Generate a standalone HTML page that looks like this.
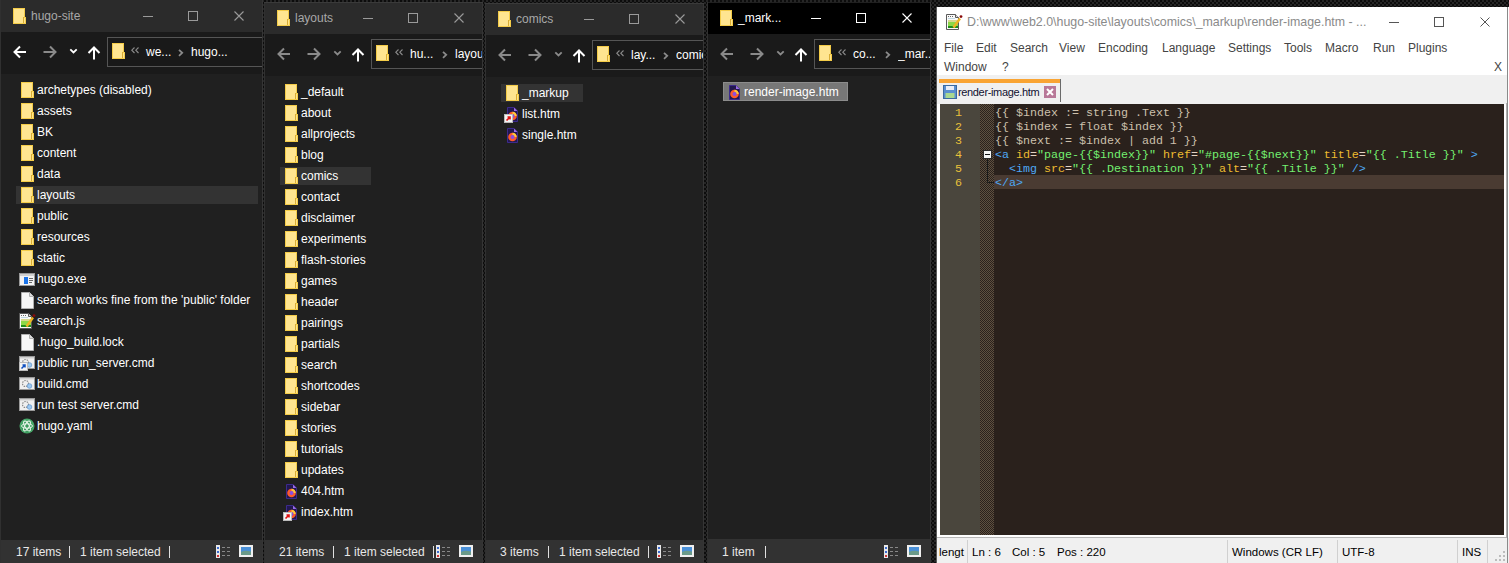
<!DOCTYPE html><html><head><meta charset="utf-8"><style>
html,body{margin:0;padding:0;}body{width:1509px;height:563px;overflow:hidden;position:relative;background-color:#0c0c0c;background-image:linear-gradient(45deg,#262626 25%,transparent 25%,transparent 75%,#262626 75%),linear-gradient(45deg,#262626 25%,transparent 25%,transparent 75%,#262626 75%);background-size:4px 4px;background-position:0 0,2px 2px;font-family:"Liberation Sans",sans-serif;}
body div{position:absolute;}.t{white-space:pre;}
</style></head><body>
<div style="left:0px;top:0px;width:263px;height:563px;background:#202020;border-left:1px solid #303030;border-right:1px solid #353535;box-sizing:border-box;"></div>
<div style="left:1px;top:0px;width:261px;height:32px;background:#2b2b2b;"></div>
<svg style="position:absolute;left:13px;top:8px;" width="13" height="16" viewBox="0 0 13 16"><rect x="0" y="0" width="12" height="16" fill="#f4cc48"/><rect x="1" y="1" width="10" height="14" fill="#ffe590"/><rect x="10" y="9" width="3" height="7" fill="#f4cc48"/><rect x="11" y="10" width="1" height="5" fill="#ffe48c"/><rect x="10" y="9" width="1" height="6" fill="#d8ac34"/><rect x="0" y="15" width="13" height="1" fill="#f4cc48"/></svg>
<div class="t" style="left:31px;top:8.5px;font-size:12px;line-height:15px;color:#a8a8a8;">hugo-site</div>
<div style="left:143px;top:16px;width:10px;height:1px;background:#9a9a9a;"></div>
<div style="left:188px;top:11px;width:10px;height:10px;background:transparent;border:1px solid #9a9a9a;box-sizing:border-box;"></div>
<svg style="position:absolute;left:234px;top:11px;" width="10" height="10" viewBox="0 0 10 10"><path d="M0.5 0.5 L9.5 9.5 M9.5 0.5 L0.5 9.5" stroke="#9a9a9a" stroke-width="1.1"/></svg>
<div style="left:1px;top:32px;width:261px;height:42px;background:#1a1a1a;"></div>
<svg style="position:absolute;left:13px;top:45px;" width="14" height="14" viewBox="0 0 14 14"><path d="M1.5 7 H13 M7 1.5 L1.5 7 L7 12.5" stroke="#ffffff" stroke-width="2" fill="none"/></svg>
<svg style="position:absolute;left:43px;top:45px;" width="14" height="14" viewBox="0 0 14 14"><path d="M0.5 7 H12 M7 1.5 L12.5 7 L7 12.5" stroke="#8a8a8a" stroke-width="2" fill="none"/></svg>
<svg style="position:absolute;left:69px;top:48px;" width="9" height="7" viewBox="0 0 9 7"><path d="M1.3 1.3 L4.5 4.5 L7.7 1.3" stroke="#ffffff" stroke-width="1.8" fill="none"/></svg>
<svg style="position:absolute;left:87px;top:46px;" width="14" height="14" viewBox="0 0 14 14"><path d="M7 13.5 V1.5 M1.5 7 L7 1.5 L12.5 7" stroke="#ffffff" stroke-width="2" fill="none"/></svg>
<div style="left:107px;top:37px;width:155px;height:30px;background:#191919;border:1px solid #555;border-right:none;box-sizing:border-box;"></div>
<svg style="position:absolute;left:112px;top:43px;" width="13" height="16" viewBox="0 0 13 16"><rect x="0" y="0" width="12" height="16" fill="#f4cc48"/><rect x="1" y="1" width="10" height="14" fill="#ffe590"/><rect x="10" y="9" width="3" height="7" fill="#f4cc48"/><rect x="11" y="10" width="1" height="5" fill="#ffe48c"/><rect x="10" y="9" width="1" height="6" fill="#d8ac34"/><rect x="0" y="15" width="13" height="1" fill="#f4cc48"/></svg>
<svg style="position:absolute;left:131px;top:47px;" width="9" height="7" viewBox="0 0 9 7"><path d="M3.5 0.5 L0.8 3.2 L3.5 6 M7.5 0.5 L4.8 3.2 L7.5 6" stroke="#8a8a8a" stroke-width="1.1" fill="none"/></svg>
<div class="t" style="left:146px;top:44.5px;font-size:12px;line-height:15px;color:#ffffff;">we...</div>
<svg style="position:absolute;left:178px;top:49px;" width="6" height="8" viewBox="0 0 6 8"><path d="M1 0.8 L4.2 3.8 L1 6.8" stroke="#8a8a8a" stroke-width="1.8" fill="none"/></svg>
<div style="left:191px;top:37px;width:71px;height:30px;overflow:hidden">
<div class="t" style="left:0px;top:7.5px;font-size:12px;line-height:15px;color:#ffffff;">hugo...</div>
</div>
<svg style="position:absolute;left:21px;top:82px;" width="13" height="16" viewBox="0 0 13 16"><rect x="0" y="0" width="12" height="16" fill="#f4cc48"/><rect x="1" y="1" width="10" height="14" fill="#ffe590"/><rect x="10" y="9" width="3" height="7" fill="#f4cc48"/><rect x="11" y="10" width="1" height="5" fill="#ffe48c"/><rect x="10" y="9" width="1" height="6" fill="#d8ac34"/><rect x="0" y="15" width="13" height="1" fill="#f4cc48"/></svg>
<div class="t" style="left:37px;top:82.5px;font-size:12px;line-height:15px;color:#ffffff;">archetypes (disabled)</div>
<svg style="position:absolute;left:21px;top:103px;" width="13" height="16" viewBox="0 0 13 16"><rect x="0" y="0" width="12" height="16" fill="#f4cc48"/><rect x="1" y="1" width="10" height="14" fill="#ffe590"/><rect x="10" y="9" width="3" height="7" fill="#f4cc48"/><rect x="11" y="10" width="1" height="5" fill="#ffe48c"/><rect x="10" y="9" width="1" height="6" fill="#d8ac34"/><rect x="0" y="15" width="13" height="1" fill="#f4cc48"/></svg>
<div class="t" style="left:37px;top:103.5px;font-size:12px;line-height:15px;color:#ffffff;">assets</div>
<svg style="position:absolute;left:21px;top:124px;" width="13" height="16" viewBox="0 0 13 16"><rect x="0" y="0" width="12" height="16" fill="#f4cc48"/><rect x="1" y="1" width="10" height="14" fill="#ffe590"/><rect x="10" y="9" width="3" height="7" fill="#f4cc48"/><rect x="11" y="10" width="1" height="5" fill="#ffe48c"/><rect x="10" y="9" width="1" height="6" fill="#d8ac34"/><rect x="0" y="15" width="13" height="1" fill="#f4cc48"/></svg>
<div class="t" style="left:37px;top:124.5px;font-size:12px;line-height:15px;color:#ffffff;">BK</div>
<svg style="position:absolute;left:21px;top:145px;" width="13" height="16" viewBox="0 0 13 16"><rect x="0" y="0" width="12" height="16" fill="#f4cc48"/><rect x="1" y="1" width="10" height="14" fill="#ffe590"/><rect x="10" y="9" width="3" height="7" fill="#f4cc48"/><rect x="11" y="10" width="1" height="5" fill="#ffe48c"/><rect x="10" y="9" width="1" height="6" fill="#d8ac34"/><rect x="0" y="15" width="13" height="1" fill="#f4cc48"/></svg>
<div class="t" style="left:37px;top:145.5px;font-size:12px;line-height:15px;color:#ffffff;">content</div>
<svg style="position:absolute;left:21px;top:166px;" width="13" height="16" viewBox="0 0 13 16"><rect x="0" y="0" width="12" height="16" fill="#f4cc48"/><rect x="1" y="1" width="10" height="14" fill="#ffe590"/><rect x="10" y="9" width="3" height="7" fill="#f4cc48"/><rect x="11" y="10" width="1" height="5" fill="#ffe48c"/><rect x="10" y="9" width="1" height="6" fill="#d8ac34"/><rect x="0" y="15" width="13" height="1" fill="#f4cc48"/></svg>
<div class="t" style="left:37px;top:166.5px;font-size:12px;line-height:15px;color:#ffffff;">data</div>
<div style="left:16px;top:186px;width:242px;height:18px;background:#333333;"></div>
<svg style="position:absolute;left:21px;top:187px;" width="13" height="16" viewBox="0 0 13 16"><rect x="0" y="0" width="12" height="16" fill="#f4cc48"/><rect x="1" y="1" width="10" height="14" fill="#ffe590"/><rect x="10" y="9" width="3" height="7" fill="#f4cc48"/><rect x="11" y="10" width="1" height="5" fill="#ffe48c"/><rect x="10" y="9" width="1" height="6" fill="#d8ac34"/><rect x="0" y="15" width="13" height="1" fill="#f4cc48"/></svg>
<div class="t" style="left:37px;top:187.5px;font-size:12px;line-height:15px;color:#ffffff;">layouts</div>
<svg style="position:absolute;left:21px;top:208px;" width="13" height="16" viewBox="0 0 13 16"><rect x="0" y="0" width="12" height="16" fill="#f4cc48"/><rect x="1" y="1" width="10" height="14" fill="#ffe590"/><rect x="10" y="9" width="3" height="7" fill="#f4cc48"/><rect x="11" y="10" width="1" height="5" fill="#ffe48c"/><rect x="10" y="9" width="1" height="6" fill="#d8ac34"/><rect x="0" y="15" width="13" height="1" fill="#f4cc48"/></svg>
<div class="t" style="left:37px;top:208.5px;font-size:12px;line-height:15px;color:#ffffff;">public</div>
<svg style="position:absolute;left:21px;top:229px;" width="13" height="16" viewBox="0 0 13 16"><rect x="0" y="0" width="12" height="16" fill="#f4cc48"/><rect x="1" y="1" width="10" height="14" fill="#ffe590"/><rect x="10" y="9" width="3" height="7" fill="#f4cc48"/><rect x="11" y="10" width="1" height="5" fill="#ffe48c"/><rect x="10" y="9" width="1" height="6" fill="#d8ac34"/><rect x="0" y="15" width="13" height="1" fill="#f4cc48"/></svg>
<div class="t" style="left:37px;top:229.5px;font-size:12px;line-height:15px;color:#ffffff;">resources</div>
<svg style="position:absolute;left:21px;top:250px;" width="13" height="16" viewBox="0 0 13 16"><rect x="0" y="0" width="12" height="16" fill="#f4cc48"/><rect x="1" y="1" width="10" height="14" fill="#ffe590"/><rect x="10" y="9" width="3" height="7" fill="#f4cc48"/><rect x="11" y="10" width="1" height="5" fill="#ffe48c"/><rect x="10" y="9" width="1" height="6" fill="#d8ac34"/><rect x="0" y="15" width="13" height="1" fill="#f4cc48"/></svg>
<div class="t" style="left:37px;top:250.5px;font-size:12px;line-height:15px;color:#ffffff;">static</div>
<svg style="position:absolute;left:19px;top:273px;" width="16" height="13" viewBox="0 0 16 13"><rect x="0.5" y="0.5" width="15" height="12" fill="#f2f2f2" stroke="#9a9a9a"/><rect x="1" y="1" width="14" height="2" fill="#cfcfcf"/><rect x="5" y="4" width="4" height="7" fill="#1a73e8"/><rect x="10" y="5" width="4" height="1" fill="#666"/><rect x="10" y="7" width="4" height="1" fill="#666"/><rect x="10" y="9" width="3" height="1" fill="#666"/></svg>
<div class="t" style="left:37px;top:271.5px;font-size:12px;line-height:15px;color:#ffffff;">hugo.exe</div>
<svg style="position:absolute;left:21px;top:292px;" width="13" height="17" viewBox="0 0 13 17"><path d="M0.5 0.5 H8.5 L12.5 4.5 V16.5 H0.5 Z" fill="#f7f7f7" stroke="#b0b0b0"/><path d="M8.5 0.5 V4.5 H12.5" fill="#ddd" stroke="#b0b0b0"/></svg>
<div class="t" style="left:37px;top:292.5px;font-size:12px;line-height:15px;color:#ffffff;">search works fine from the &#x27;public&#x27; folder</div>
<svg style="position:absolute;left:19px;top:313px;" width="17" height="17" viewBox="0 0 17 17"><path d="M0.5 0.5 H9.5 L12.5 3.5 V15.5 H0.5 Z" fill="#fafafa" stroke="#5a5a5a"/><path d="M9.5 0.5 V3.5 H12.5" fill="#e0e0e0" stroke="#5a5a5a"/><rect x="2" y="2" width="1" height="1" fill="#666"/><rect x="4" y="2" width="1" height="1" fill="#666"/><rect x="6" y="2" width="1" height="1" fill="#666"/><rect x="2" y="4" width="7" height="1" fill="#c0d8e0"/><rect x="2" y="6" width="10" height="2" fill="#d8d890"/><rect x="2" y="8" width="10" height="4" fill="#8cd848"/><rect x="2" y="12" width="10" height="2" fill="#1e8a1a"/><path d="M7.5 13.5 L14 4.5" stroke="#eeb422" stroke-width="2.4"/><circle cx="15" cy="2.6" r="1.4" fill="#8a0a0a"/></svg>
<div class="t" style="left:37px;top:313.5px;font-size:12px;line-height:15px;color:#ffffff;">search.js</div>
<svg style="position:absolute;left:21px;top:334px;" width="13" height="17" viewBox="0 0 13 17"><path d="M0.5 0.5 H8.5 L12.5 4.5 V16.5 H0.5 Z" fill="#f7f7f7" stroke="#b0b0b0"/><path d="M8.5 0.5 V4.5 H12.5" fill="#ddd" stroke="#b0b0b0"/></svg>
<div class="t" style="left:37px;top:334.5px;font-size:12px;line-height:15px;color:#ffffff;">.hugo_build.lock</div>
<svg style="position:absolute;left:19px;top:356px;" width="16" height="13" viewBox="0 0 16 13"><rect x="0.5" y="0.5" width="15" height="12" fill="#f0f0f0" stroke="#9a9a9a"/><rect x="1" y="1" width="14" height="1.5" fill="#cfcfcf"/><circle cx="6.5" cy="6.5" r="3" fill="none" stroke="#888" stroke-width="1.2" stroke-dasharray="1.5 1"/><circle cx="10.5" cy="9" r="2.3" fill="#9cc8f0" stroke="#6a9bd0" stroke-width="0.8"/></svg>
<svg style="position:absolute;left:19px;top:362px;" width="9" height="9" viewBox="0 0 9 9"><rect x="0.5" y="0.5" width="8" height="8" fill="#f4f4f4" stroke="#bbb"/><path d="M2.5 6.5 L6 3 M3.5 3 H6 V5.5" stroke="#1050c0" stroke-width="1.5" fill="none"/></svg>
<div class="t" style="left:37px;top:355.5px;font-size:12px;line-height:15px;color:#ffffff;">public run_server.cmd</div>
<svg style="position:absolute;left:19px;top:377px;" width="16" height="13" viewBox="0 0 16 13"><rect x="0.5" y="0.5" width="15" height="12" fill="#f0f0f0" stroke="#9a9a9a"/><rect x="1" y="1" width="14" height="1.5" fill="#cfcfcf"/><circle cx="6.5" cy="6.5" r="3" fill="none" stroke="#888" stroke-width="1.2" stroke-dasharray="1.5 1"/><circle cx="10.5" cy="9" r="2.3" fill="#9cc8f0" stroke="#6a9bd0" stroke-width="0.8"/></svg>
<div class="t" style="left:37px;top:376.5px;font-size:12px;line-height:15px;color:#ffffff;">build.cmd</div>
<svg style="position:absolute;left:19px;top:398px;" width="16" height="13" viewBox="0 0 16 13"><rect x="0.5" y="0.5" width="15" height="12" fill="#f0f0f0" stroke="#9a9a9a"/><rect x="1" y="1" width="14" height="1.5" fill="#cfcfcf"/><circle cx="6.5" cy="6.5" r="3" fill="none" stroke="#888" stroke-width="1.2" stroke-dasharray="1.5 1"/><circle cx="10.5" cy="9" r="2.3" fill="#9cc8f0" stroke="#6a9bd0" stroke-width="0.8"/></svg>
<div class="t" style="left:37px;top:397.5px;font-size:12px;line-height:15px;color:#ffffff;">run test server.cmd</div>
<svg style="position:absolute;left:19px;top:418px;" width="16" height="16" viewBox="0 0 16 16"><circle cx="8" cy="8" r="7.5" fill="#48a86a"/><circle cx="8" cy="9" r="5.5" fill="#3a9a5c"/><ellipse cx="8" cy="8" rx="5.5" ry="2.2" fill="none" stroke="#e8f5ea" stroke-width="1"/><ellipse cx="8" cy="8" rx="5.5" ry="2.2" fill="none" stroke="#e8f5ea" stroke-width="1" transform="rotate(60 8 8)"/><ellipse cx="8" cy="8" rx="5.5" ry="2.2" fill="none" stroke="#e8f5ea" stroke-width="1" transform="rotate(-60 8 8)"/></svg>
<div class="t" style="left:37px;top:418.5px;font-size:12px;line-height:15px;color:#ffffff;">hugo.yaml</div>
<div style="left:1px;top:540px;width:261px;height:23px;background:#323232;"></div>
<div class="t" style="left:16px;top:545.0px;font-size:12px;line-height:15px;color:#e8e8e8;">17 items</div>
<div style="left:69px;top:546px;width:1px;height:12px;background:#e0e0e0;"></div>
<div class="t" style="left:80px;top:545.0px;font-size:12px;line-height:15px;color:#e8e8e8;">1 item selected</div>
<div style="left:169px;top:546px;width:1px;height:12px;background:#e0e0e0;"></div>
<svg style="position:absolute;left:216px;top:545px;" width="17" height="13" viewBox="0 0 17 13"><rect x="0" y="0" width="4" height="13" fill="#e8e8e8"/><rect x="1" y="2" width="2" height="2" fill="#3a6ad0"/><rect x="1" y="6" width="2" height="2" fill="#3a6ad0"/><rect x="1" y="10" width="2" height="2" fill="#d03030"/><path d="M6 2.5 H9 M11 2.5 H14 M6 6.5 H9 M11 6.5 H14 M6 10.5 H9 M11 10.5 H14" stroke="#888" stroke-width="1"/></svg>
<svg style="position:absolute;left:239px;top:545px;" width="14" height="12" viewBox="0 0 14 12"><rect x="0" y="0" width="14" height="12" fill="#f0f0f0"/><rect x="2" y="2" width="10" height="8" fill="#4a90d8"/><path d="M2 7 Q6 5 12 6.5 V10 H2 Z" fill="#6a9a8a"/></svg>
<div style="left:264px;top:2px;width:219px;height:561px;background:#202020;border-left:1px solid #303030;border-right:1px solid #353535;box-sizing:border-box;"></div>
<div style="left:265px;top:3px;width:217px;height:31px;background:#2b2b2b;"></div>
<div style="left:264px;top:2px;width:219px;height:1px;background:#3a3a3a;"></div>
<svg style="position:absolute;left:277px;top:10px;" width="13" height="16" viewBox="0 0 13 16"><rect x="0" y="0" width="12" height="16" fill="#f4cc48"/><rect x="1" y="1" width="10" height="14" fill="#ffe590"/><rect x="10" y="9" width="3" height="7" fill="#f4cc48"/><rect x="11" y="10" width="1" height="5" fill="#ffe48c"/><rect x="10" y="9" width="1" height="6" fill="#d8ac34"/><rect x="0" y="15" width="13" height="1" fill="#f4cc48"/></svg>
<div class="t" style="left:295px;top:10.5px;font-size:12px;line-height:15px;color:#a8a8a8;">layouts</div>
<div style="left:363px;top:18px;width:10px;height:1px;background:#9a9a9a;"></div>
<div style="left:408px;top:13px;width:10px;height:10px;background:transparent;border:1px solid #9a9a9a;box-sizing:border-box;"></div>
<svg style="position:absolute;left:454px;top:13px;" width="10" height="10" viewBox="0 0 10 10"><path d="M0.5 0.5 L9.5 9.5 M9.5 0.5 L0.5 9.5" stroke="#9a9a9a" stroke-width="1.1"/></svg>
<div style="left:265px;top:34px;width:217px;height:42px;background:#1a1a1a;"></div>
<svg style="position:absolute;left:277px;top:47px;" width="14" height="14" viewBox="0 0 14 14"><path d="M1.5 7 H13 M7 1.5 L1.5 7 L7 12.5" stroke="#8a8a8a" stroke-width="2" fill="none"/></svg>
<svg style="position:absolute;left:307px;top:47px;" width="14" height="14" viewBox="0 0 14 14"><path d="M0.5 7 H12 M7 1.5 L12.5 7 L7 12.5" stroke="#8a8a8a" stroke-width="2" fill="none"/></svg>
<svg style="position:absolute;left:333px;top:50px;" width="9" height="7" viewBox="0 0 9 7"><path d="M1.3 1.3 L4.5 4.5 L7.7 1.3" stroke="#8a8a8a" stroke-width="1.8" fill="none"/></svg>
<svg style="position:absolute;left:351px;top:48px;" width="14" height="14" viewBox="0 0 14 14"><path d="M7 13.5 V1.5 M1.5 7 L7 1.5 L12.5 7" stroke="#ffffff" stroke-width="2" fill="none"/></svg>
<div style="left:371px;top:39px;width:111px;height:30px;background:#191919;border:1px solid #555;border-right:none;box-sizing:border-box;"></div>
<svg style="position:absolute;left:376px;top:45px;" width="13" height="16" viewBox="0 0 13 16"><rect x="0" y="0" width="12" height="16" fill="#f4cc48"/><rect x="1" y="1" width="10" height="14" fill="#ffe590"/><rect x="10" y="9" width="3" height="7" fill="#f4cc48"/><rect x="11" y="10" width="1" height="5" fill="#ffe48c"/><rect x="10" y="9" width="1" height="6" fill="#d8ac34"/><rect x="0" y="15" width="13" height="1" fill="#f4cc48"/></svg>
<svg style="position:absolute;left:395px;top:49px;" width="9" height="7" viewBox="0 0 9 7"><path d="M3.5 0.5 L0.8 3.2 L3.5 6 M7.5 0.5 L4.8 3.2 L7.5 6" stroke="#8a8a8a" stroke-width="1.1" fill="none"/></svg>
<div class="t" style="left:410px;top:46.5px;font-size:12px;line-height:15px;color:#ffffff;">hu...</div>
<svg style="position:absolute;left:442px;top:51px;" width="6" height="8" viewBox="0 0 6 8"><path d="M1 0.8 L4.2 3.8 L1 6.8" stroke="#8a8a8a" stroke-width="1.8" fill="none"/></svg>
<div style="left:455px;top:39px;width:27px;height:30px;overflow:hidden">
<div class="t" style="left:0px;top:7.5px;font-size:12px;line-height:15px;color:#ffffff;">layouts</div>
</div>
<svg style="position:absolute;left:285px;top:84px;" width="13" height="16" viewBox="0 0 13 16"><rect x="0" y="0" width="12" height="16" fill="#f4cc48"/><rect x="1" y="1" width="10" height="14" fill="#ffe590"/><rect x="10" y="9" width="3" height="7" fill="#f4cc48"/><rect x="11" y="10" width="1" height="5" fill="#ffe48c"/><rect x="10" y="9" width="1" height="6" fill="#d8ac34"/><rect x="0" y="15" width="13" height="1" fill="#f4cc48"/></svg>
<div class="t" style="left:301px;top:84.5px;font-size:12px;line-height:15px;color:#ffffff;">_default</div>
<svg style="position:absolute;left:285px;top:105px;" width="13" height="16" viewBox="0 0 13 16"><rect x="0" y="0" width="12" height="16" fill="#f4cc48"/><rect x="1" y="1" width="10" height="14" fill="#ffe590"/><rect x="10" y="9" width="3" height="7" fill="#f4cc48"/><rect x="11" y="10" width="1" height="5" fill="#ffe48c"/><rect x="10" y="9" width="1" height="6" fill="#d8ac34"/><rect x="0" y="15" width="13" height="1" fill="#f4cc48"/></svg>
<div class="t" style="left:301px;top:105.5px;font-size:12px;line-height:15px;color:#ffffff;">about</div>
<svg style="position:absolute;left:285px;top:126px;" width="13" height="16" viewBox="0 0 13 16"><rect x="0" y="0" width="12" height="16" fill="#f4cc48"/><rect x="1" y="1" width="10" height="14" fill="#ffe590"/><rect x="10" y="9" width="3" height="7" fill="#f4cc48"/><rect x="11" y="10" width="1" height="5" fill="#ffe48c"/><rect x="10" y="9" width="1" height="6" fill="#d8ac34"/><rect x="0" y="15" width="13" height="1" fill="#f4cc48"/></svg>
<div class="t" style="left:301px;top:126.5px;font-size:12px;line-height:15px;color:#ffffff;">allprojects</div>
<svg style="position:absolute;left:285px;top:147px;" width="13" height="16" viewBox="0 0 13 16"><rect x="0" y="0" width="12" height="16" fill="#f4cc48"/><rect x="1" y="1" width="10" height="14" fill="#ffe590"/><rect x="10" y="9" width="3" height="7" fill="#f4cc48"/><rect x="11" y="10" width="1" height="5" fill="#ffe48c"/><rect x="10" y="9" width="1" height="6" fill="#d8ac34"/><rect x="0" y="15" width="13" height="1" fill="#f4cc48"/></svg>
<div class="t" style="left:301px;top:147.5px;font-size:12px;line-height:15px;color:#ffffff;">blog</div>
<div style="left:280px;top:167px;width:91px;height:18px;background:#333333;"></div>
<svg style="position:absolute;left:285px;top:168px;" width="13" height="16" viewBox="0 0 13 16"><rect x="0" y="0" width="12" height="16" fill="#f4cc48"/><rect x="1" y="1" width="10" height="14" fill="#ffe590"/><rect x="10" y="9" width="3" height="7" fill="#f4cc48"/><rect x="11" y="10" width="1" height="5" fill="#ffe48c"/><rect x="10" y="9" width="1" height="6" fill="#d8ac34"/><rect x="0" y="15" width="13" height="1" fill="#f4cc48"/></svg>
<div class="t" style="left:301px;top:168.5px;font-size:12px;line-height:15px;color:#ffffff;">comics</div>
<svg style="position:absolute;left:285px;top:189px;" width="13" height="16" viewBox="0 0 13 16"><rect x="0" y="0" width="12" height="16" fill="#f4cc48"/><rect x="1" y="1" width="10" height="14" fill="#ffe590"/><rect x="10" y="9" width="3" height="7" fill="#f4cc48"/><rect x="11" y="10" width="1" height="5" fill="#ffe48c"/><rect x="10" y="9" width="1" height="6" fill="#d8ac34"/><rect x="0" y="15" width="13" height="1" fill="#f4cc48"/></svg>
<div class="t" style="left:301px;top:189.5px;font-size:12px;line-height:15px;color:#ffffff;">contact</div>
<svg style="position:absolute;left:285px;top:210px;" width="13" height="16" viewBox="0 0 13 16"><rect x="0" y="0" width="12" height="16" fill="#f4cc48"/><rect x="1" y="1" width="10" height="14" fill="#ffe590"/><rect x="10" y="9" width="3" height="7" fill="#f4cc48"/><rect x="11" y="10" width="1" height="5" fill="#ffe48c"/><rect x="10" y="9" width="1" height="6" fill="#d8ac34"/><rect x="0" y="15" width="13" height="1" fill="#f4cc48"/></svg>
<div class="t" style="left:301px;top:210.5px;font-size:12px;line-height:15px;color:#ffffff;">disclaimer</div>
<svg style="position:absolute;left:285px;top:231px;" width="13" height="16" viewBox="0 0 13 16"><rect x="0" y="0" width="12" height="16" fill="#f4cc48"/><rect x="1" y="1" width="10" height="14" fill="#ffe590"/><rect x="10" y="9" width="3" height="7" fill="#f4cc48"/><rect x="11" y="10" width="1" height="5" fill="#ffe48c"/><rect x="10" y="9" width="1" height="6" fill="#d8ac34"/><rect x="0" y="15" width="13" height="1" fill="#f4cc48"/></svg>
<div class="t" style="left:301px;top:231.5px;font-size:12px;line-height:15px;color:#ffffff;">experiments</div>
<svg style="position:absolute;left:285px;top:252px;" width="13" height="16" viewBox="0 0 13 16"><rect x="0" y="0" width="12" height="16" fill="#f4cc48"/><rect x="1" y="1" width="10" height="14" fill="#ffe590"/><rect x="10" y="9" width="3" height="7" fill="#f4cc48"/><rect x="11" y="10" width="1" height="5" fill="#ffe48c"/><rect x="10" y="9" width="1" height="6" fill="#d8ac34"/><rect x="0" y="15" width="13" height="1" fill="#f4cc48"/></svg>
<div class="t" style="left:301px;top:252.5px;font-size:12px;line-height:15px;color:#ffffff;">flash-stories</div>
<svg style="position:absolute;left:285px;top:273px;" width="13" height="16" viewBox="0 0 13 16"><rect x="0" y="0" width="12" height="16" fill="#f4cc48"/><rect x="1" y="1" width="10" height="14" fill="#ffe590"/><rect x="10" y="9" width="3" height="7" fill="#f4cc48"/><rect x="11" y="10" width="1" height="5" fill="#ffe48c"/><rect x="10" y="9" width="1" height="6" fill="#d8ac34"/><rect x="0" y="15" width="13" height="1" fill="#f4cc48"/></svg>
<div class="t" style="left:301px;top:273.5px;font-size:12px;line-height:15px;color:#ffffff;">games</div>
<svg style="position:absolute;left:285px;top:294px;" width="13" height="16" viewBox="0 0 13 16"><rect x="0" y="0" width="12" height="16" fill="#f4cc48"/><rect x="1" y="1" width="10" height="14" fill="#ffe590"/><rect x="10" y="9" width="3" height="7" fill="#f4cc48"/><rect x="11" y="10" width="1" height="5" fill="#ffe48c"/><rect x="10" y="9" width="1" height="6" fill="#d8ac34"/><rect x="0" y="15" width="13" height="1" fill="#f4cc48"/></svg>
<div class="t" style="left:301px;top:294.5px;font-size:12px;line-height:15px;color:#ffffff;">header</div>
<svg style="position:absolute;left:285px;top:315px;" width="13" height="16" viewBox="0 0 13 16"><rect x="0" y="0" width="12" height="16" fill="#f4cc48"/><rect x="1" y="1" width="10" height="14" fill="#ffe590"/><rect x="10" y="9" width="3" height="7" fill="#f4cc48"/><rect x="11" y="10" width="1" height="5" fill="#ffe48c"/><rect x="10" y="9" width="1" height="6" fill="#d8ac34"/><rect x="0" y="15" width="13" height="1" fill="#f4cc48"/></svg>
<div class="t" style="left:301px;top:315.5px;font-size:12px;line-height:15px;color:#ffffff;">pairings</div>
<svg style="position:absolute;left:285px;top:336px;" width="13" height="16" viewBox="0 0 13 16"><rect x="0" y="0" width="12" height="16" fill="#f4cc48"/><rect x="1" y="1" width="10" height="14" fill="#ffe590"/><rect x="10" y="9" width="3" height="7" fill="#f4cc48"/><rect x="11" y="10" width="1" height="5" fill="#ffe48c"/><rect x="10" y="9" width="1" height="6" fill="#d8ac34"/><rect x="0" y="15" width="13" height="1" fill="#f4cc48"/></svg>
<div class="t" style="left:301px;top:336.5px;font-size:12px;line-height:15px;color:#ffffff;">partials</div>
<svg style="position:absolute;left:285px;top:357px;" width="13" height="16" viewBox="0 0 13 16"><rect x="0" y="0" width="12" height="16" fill="#f4cc48"/><rect x="1" y="1" width="10" height="14" fill="#ffe590"/><rect x="10" y="9" width="3" height="7" fill="#f4cc48"/><rect x="11" y="10" width="1" height="5" fill="#ffe48c"/><rect x="10" y="9" width="1" height="6" fill="#d8ac34"/><rect x="0" y="15" width="13" height="1" fill="#f4cc48"/></svg>
<div class="t" style="left:301px;top:357.5px;font-size:12px;line-height:15px;color:#ffffff;">search</div>
<svg style="position:absolute;left:285px;top:378px;" width="13" height="16" viewBox="0 0 13 16"><rect x="0" y="0" width="12" height="16" fill="#f4cc48"/><rect x="1" y="1" width="10" height="14" fill="#ffe590"/><rect x="10" y="9" width="3" height="7" fill="#f4cc48"/><rect x="11" y="10" width="1" height="5" fill="#ffe48c"/><rect x="10" y="9" width="1" height="6" fill="#d8ac34"/><rect x="0" y="15" width="13" height="1" fill="#f4cc48"/></svg>
<div class="t" style="left:301px;top:378.5px;font-size:12px;line-height:15px;color:#ffffff;">shortcodes</div>
<svg style="position:absolute;left:285px;top:399px;" width="13" height="16" viewBox="0 0 13 16"><rect x="0" y="0" width="12" height="16" fill="#f4cc48"/><rect x="1" y="1" width="10" height="14" fill="#ffe590"/><rect x="10" y="9" width="3" height="7" fill="#f4cc48"/><rect x="11" y="10" width="1" height="5" fill="#ffe48c"/><rect x="10" y="9" width="1" height="6" fill="#d8ac34"/><rect x="0" y="15" width="13" height="1" fill="#f4cc48"/></svg>
<div class="t" style="left:301px;top:399.5px;font-size:12px;line-height:15px;color:#ffffff;">sidebar</div>
<svg style="position:absolute;left:285px;top:420px;" width="13" height="16" viewBox="0 0 13 16"><rect x="0" y="0" width="12" height="16" fill="#f4cc48"/><rect x="1" y="1" width="10" height="14" fill="#ffe590"/><rect x="10" y="9" width="3" height="7" fill="#f4cc48"/><rect x="11" y="10" width="1" height="5" fill="#ffe48c"/><rect x="10" y="9" width="1" height="6" fill="#d8ac34"/><rect x="0" y="15" width="13" height="1" fill="#f4cc48"/></svg>
<div class="t" style="left:301px;top:420.5px;font-size:12px;line-height:15px;color:#ffffff;">stories</div>
<svg style="position:absolute;left:285px;top:441px;" width="13" height="16" viewBox="0 0 13 16"><rect x="0" y="0" width="12" height="16" fill="#f4cc48"/><rect x="1" y="1" width="10" height="14" fill="#ffe590"/><rect x="10" y="9" width="3" height="7" fill="#f4cc48"/><rect x="11" y="10" width="1" height="5" fill="#ffe48c"/><rect x="10" y="9" width="1" height="6" fill="#d8ac34"/><rect x="0" y="15" width="13" height="1" fill="#f4cc48"/></svg>
<div class="t" style="left:301px;top:441.5px;font-size:12px;line-height:15px;color:#ffffff;">tutorials</div>
<svg style="position:absolute;left:285px;top:462px;" width="13" height="16" viewBox="0 0 13 16"><rect x="0" y="0" width="12" height="16" fill="#f4cc48"/><rect x="1" y="1" width="10" height="14" fill="#ffe590"/><rect x="10" y="9" width="3" height="7" fill="#f4cc48"/><rect x="11" y="10" width="1" height="5" fill="#ffe48c"/><rect x="10" y="9" width="1" height="6" fill="#d8ac34"/><rect x="0" y="15" width="13" height="1" fill="#f4cc48"/></svg>
<div class="t" style="left:301px;top:462.5px;font-size:12px;line-height:15px;color:#ffffff;">updates</div>
<svg style="position:absolute;left:286px;top:484px;" width="11" height="15" viewBox="0 0 11 15"><path d="M0.5 0.5 H7 L10.5 4 V14.5 H0.5 Z" fill="#22184f" stroke="#3c2a8c"/><path d="M7 0.5 V4 H10.5 Z" fill="#9a6ae8"/><circle cx="5.5" cy="9" r="4.3" fill="#ff5a2a"/><path d="M5.5 4.7 A4.3 4.3 0 0 1 9.8 9 L7.5 9 A2 2 0 0 0 5.5 7 Z" fill="#ffc93a"/><circle cx="5.5" cy="9" r="2" fill="#8b4fe0"/></svg>
<div class="t" style="left:301px;top:483.5px;font-size:12px;line-height:15px;color:#ffffff;">404.htm</div>
<svg style="position:absolute;left:286px;top:505px;" width="11" height="15" viewBox="0 0 11 15"><path d="M0.5 0.5 H7 L10.5 4 V14.5 H0.5 Z" fill="#22184f" stroke="#3c2a8c"/><path d="M7 0.5 V4 H10.5 Z" fill="#9a6ae8"/><circle cx="5.5" cy="9" r="4.3" fill="#ff5a2a"/><path d="M5.5 4.7 A4.3 4.3 0 0 1 9.8 9 L7.5 9 A2 2 0 0 0 5.5 7 Z" fill="#ffc93a"/><circle cx="5.5" cy="9" r="2" fill="#8b4fe0"/></svg>
<svg style="position:absolute;left:283px;top:512px;" width="9" height="9" viewBox="0 0 9 9"><rect x="0.5" y="0.5" width="8" height="8" fill="#f4f4f4" stroke="#bbb"/><path d="M2.5 6.5 L6 3 M3.5 3 H6 V5.5" stroke="#e01010" stroke-width="1.6" fill="none"/></svg>
<div class="t" style="left:301px;top:504.5px;font-size:12px;line-height:15px;color:#ffffff;">index.htm</div>
<div style="left:265px;top:540px;width:217px;height:23px;background:#323232;"></div>
<div class="t" style="left:279px;top:545.0px;font-size:12px;line-height:15px;color:#e8e8e8;">21 items</div>
<div style="left:333px;top:546px;width:1px;height:12px;background:#e0e0e0;"></div>
<div class="t" style="left:344px;top:545.0px;font-size:12px;line-height:15px;color:#e8e8e8;">1 item selected</div>
<div style="left:433px;top:546px;width:1px;height:12px;background:#e0e0e0;"></div>
<svg style="position:absolute;left:436px;top:545px;" width="17" height="13" viewBox="0 0 17 13"><rect x="0" y="0" width="4" height="13" fill="#e8e8e8"/><rect x="1" y="2" width="2" height="2" fill="#3a6ad0"/><rect x="1" y="6" width="2" height="2" fill="#3a6ad0"/><rect x="1" y="10" width="2" height="2" fill="#d03030"/><path d="M6 2.5 H9 M11 2.5 H14 M6 6.5 H9 M11 6.5 H14 M6 10.5 H9 M11 10.5 H14" stroke="#888" stroke-width="1"/></svg>
<svg style="position:absolute;left:459px;top:545px;" width="14" height="12" viewBox="0 0 14 12"><rect x="0" y="0" width="14" height="12" fill="#f0f0f0"/><rect x="2" y="2" width="10" height="8" fill="#4a90d8"/><path d="M2 7 Q6 5 12 6.5 V10 H2 Z" fill="#6a9a8a"/></svg>
<div style="left:485px;top:3px;width:219px;height:560px;background:#202020;border-left:1px solid #303030;border-right:1px solid #353535;box-sizing:border-box;"></div>
<div style="left:486px;top:4px;width:217px;height:31px;background:#2b2b2b;"></div>
<div style="left:485px;top:3px;width:219px;height:1px;background:#3a3a3a;"></div>
<svg style="position:absolute;left:498px;top:11px;" width="13" height="16" viewBox="0 0 13 16"><rect x="0" y="0" width="12" height="16" fill="#f4cc48"/><rect x="1" y="1" width="10" height="14" fill="#ffe590"/><rect x="10" y="9" width="3" height="7" fill="#f4cc48"/><rect x="11" y="10" width="1" height="5" fill="#ffe48c"/><rect x="10" y="9" width="1" height="6" fill="#d8ac34"/><rect x="0" y="15" width="13" height="1" fill="#f4cc48"/></svg>
<div class="t" style="left:516px;top:11.5px;font-size:12px;line-height:15px;color:#a8a8a8;">comics</div>
<div style="left:584px;top:19px;width:10px;height:1px;background:#9a9a9a;"></div>
<div style="left:629px;top:14px;width:10px;height:10px;background:transparent;border:1px solid #9a9a9a;box-sizing:border-box;"></div>
<svg style="position:absolute;left:675px;top:14px;" width="10" height="10" viewBox="0 0 10 10"><path d="M0.5 0.5 L9.5 9.5 M9.5 0.5 L0.5 9.5" stroke="#9a9a9a" stroke-width="1.1"/></svg>
<div style="left:486px;top:35px;width:217px;height:42px;background:#1a1a1a;"></div>
<svg style="position:absolute;left:498px;top:48px;" width="14" height="14" viewBox="0 0 14 14"><path d="M1.5 7 H13 M7 1.5 L1.5 7 L7 12.5" stroke="#8a8a8a" stroke-width="2" fill="none"/></svg>
<svg style="position:absolute;left:528px;top:48px;" width="14" height="14" viewBox="0 0 14 14"><path d="M0.5 7 H12 M7 1.5 L12.5 7 L7 12.5" stroke="#8a8a8a" stroke-width="2" fill="none"/></svg>
<svg style="position:absolute;left:554px;top:51px;" width="9" height="7" viewBox="0 0 9 7"><path d="M1.3 1.3 L4.5 4.5 L7.7 1.3" stroke="#8a8a8a" stroke-width="1.8" fill="none"/></svg>
<svg style="position:absolute;left:572px;top:49px;" width="14" height="14" viewBox="0 0 14 14"><path d="M7 13.5 V1.5 M1.5 7 L7 1.5 L12.5 7" stroke="#ffffff" stroke-width="2" fill="none"/></svg>
<div style="left:592px;top:40px;width:111px;height:30px;background:#191919;border:1px solid #555;border-right:none;box-sizing:border-box;"></div>
<svg style="position:absolute;left:597px;top:46px;" width="13" height="16" viewBox="0 0 13 16"><rect x="0" y="0" width="12" height="16" fill="#f4cc48"/><rect x="1" y="1" width="10" height="14" fill="#ffe590"/><rect x="10" y="9" width="3" height="7" fill="#f4cc48"/><rect x="11" y="10" width="1" height="5" fill="#ffe48c"/><rect x="10" y="9" width="1" height="6" fill="#d8ac34"/><rect x="0" y="15" width="13" height="1" fill="#f4cc48"/></svg>
<svg style="position:absolute;left:616px;top:50px;" width="9" height="7" viewBox="0 0 9 7"><path d="M3.5 0.5 L0.8 3.2 L3.5 6 M7.5 0.5 L4.8 3.2 L7.5 6" stroke="#8a8a8a" stroke-width="1.1" fill="none"/></svg>
<div class="t" style="left:631px;top:47.5px;font-size:12px;line-height:15px;color:#ffffff;">lay...</div>
<svg style="position:absolute;left:663px;top:52px;" width="6" height="8" viewBox="0 0 6 8"><path d="M1 0.8 L4.2 3.8 L1 6.8" stroke="#8a8a8a" stroke-width="1.8" fill="none"/></svg>
<div style="left:676px;top:40px;width:27px;height:30px;overflow:hidden">
<div class="t" style="left:0px;top:7.5px;font-size:12px;line-height:15px;color:#ffffff;">comics</div>
</div>
<div style="left:501px;top:84px;width:82px;height:18px;background:#333333;"></div>
<svg style="position:absolute;left:506px;top:85px;" width="13" height="16" viewBox="0 0 13 16"><rect x="0" y="0" width="12" height="16" fill="#f4cc48"/><rect x="1" y="1" width="10" height="14" fill="#ffe590"/><rect x="10" y="9" width="3" height="7" fill="#f4cc48"/><rect x="11" y="10" width="1" height="5" fill="#ffe48c"/><rect x="10" y="9" width="1" height="6" fill="#d8ac34"/><rect x="0" y="15" width="13" height="1" fill="#f4cc48"/></svg>
<div class="t" style="left:522px;top:85.5px;font-size:12px;line-height:15px;color:#ffffff;">_markup</div>
<svg style="position:absolute;left:507px;top:107px;" width="11" height="15" viewBox="0 0 11 15"><path d="M0.5 0.5 H7 L10.5 4 V14.5 H0.5 Z" fill="#22184f" stroke="#3c2a8c"/><path d="M7 0.5 V4 H10.5 Z" fill="#9a6ae8"/><circle cx="5.5" cy="9" r="4.3" fill="#ff5a2a"/><path d="M5.5 4.7 A4.3 4.3 0 0 1 9.8 9 L7.5 9 A2 2 0 0 0 5.5 7 Z" fill="#ffc93a"/><circle cx="5.5" cy="9" r="2" fill="#8b4fe0"/></svg>
<svg style="position:absolute;left:504px;top:114px;" width="9" height="9" viewBox="0 0 9 9"><rect x="0.5" y="0.5" width="8" height="8" fill="#f4f4f4" stroke="#bbb"/><path d="M2.5 6.5 L6 3 M3.5 3 H6 V5.5" stroke="#e01010" stroke-width="1.6" fill="none"/></svg>
<div class="t" style="left:522px;top:106.5px;font-size:12px;line-height:15px;color:#ffffff;">list.htm</div>
<svg style="position:absolute;left:507px;top:128px;" width="11" height="15" viewBox="0 0 11 15"><path d="M0.5 0.5 H7 L10.5 4 V14.5 H0.5 Z" fill="#22184f" stroke="#3c2a8c"/><path d="M7 0.5 V4 H10.5 Z" fill="#9a6ae8"/><circle cx="5.5" cy="9" r="4.3" fill="#ff5a2a"/><path d="M5.5 4.7 A4.3 4.3 0 0 1 9.8 9 L7.5 9 A2 2 0 0 0 5.5 7 Z" fill="#ffc93a"/><circle cx="5.5" cy="9" r="2" fill="#8b4fe0"/></svg>
<div class="t" style="left:522px;top:127.5px;font-size:12px;line-height:15px;color:#ffffff;">single.htm</div>
<div style="left:486px;top:540px;width:217px;height:23px;background:#323232;"></div>
<div class="t" style="left:500px;top:545.0px;font-size:12px;line-height:15px;color:#e8e8e8;">3 items</div>
<div style="left:548px;top:546px;width:1px;height:12px;background:#e0e0e0;"></div>
<div class="t" style="left:559px;top:545.0px;font-size:12px;line-height:15px;color:#e8e8e8;">1 item selected</div>
<div style="left:648px;top:546px;width:1px;height:12px;background:#e0e0e0;"></div>
<svg style="position:absolute;left:657px;top:545px;" width="17" height="13" viewBox="0 0 17 13"><rect x="0" y="0" width="4" height="13" fill="#e8e8e8"/><rect x="1" y="2" width="2" height="2" fill="#3a6ad0"/><rect x="1" y="6" width="2" height="2" fill="#3a6ad0"/><rect x="1" y="10" width="2" height="2" fill="#d03030"/><path d="M6 2.5 H9 M11 2.5 H14 M6 6.5 H9 M11 6.5 H14 M6 10.5 H9 M11 10.5 H14" stroke="#888" stroke-width="1"/></svg>
<svg style="position:absolute;left:680px;top:545px;" width="14" height="12" viewBox="0 0 14 12"><rect x="0" y="0" width="14" height="12" fill="#f0f0f0"/><rect x="2" y="2" width="10" height="8" fill="#4a90d8"/><path d="M2 7 Q6 5 12 6.5 V10 H2 Z" fill="#6a9a8a"/></svg>
<div style="left:707px;top:2px;width:224px;height:561px;background:#202020;border-left:1px solid #303030;border-right:1px solid #353535;box-sizing:border-box;"></div>
<div style="left:708px;top:3px;width:222px;height:31px;background:#000000;"></div>
<svg style="position:absolute;left:720px;top:10px;" width="13" height="16" viewBox="0 0 13 16"><rect x="0" y="0" width="12" height="16" fill="#f4cc48"/><rect x="1" y="1" width="10" height="14" fill="#ffe590"/><rect x="10" y="9" width="3" height="7" fill="#f4cc48"/><rect x="11" y="10" width="1" height="5" fill="#ffe48c"/><rect x="10" y="9" width="1" height="6" fill="#d8ac34"/><rect x="0" y="15" width="13" height="1" fill="#f4cc48"/></svg>
<div class="t" style="left:738px;top:10.5px;font-size:12px;line-height:15px;color:#ffffff;">_mark...</div>
<div style="left:811px;top:18px;width:10px;height:1px;background:#ffffff;"></div>
<div style="left:856px;top:13px;width:10px;height:10px;background:transparent;border:1px solid #ffffff;box-sizing:border-box;"></div>
<svg style="position:absolute;left:902px;top:13px;" width="10" height="10" viewBox="0 0 10 10"><path d="M0.5 0.5 L9.5 9.5 M9.5 0.5 L0.5 9.5" stroke="#ffffff" stroke-width="1.1"/></svg>
<div style="left:708px;top:34px;width:222px;height:42px;background:#1a1a1a;"></div>
<svg style="position:absolute;left:720px;top:47px;" width="14" height="14" viewBox="0 0 14 14"><path d="M1.5 7 H13 M7 1.5 L1.5 7 L7 12.5" stroke="#8a8a8a" stroke-width="2" fill="none"/></svg>
<svg style="position:absolute;left:750px;top:47px;" width="14" height="14" viewBox="0 0 14 14"><path d="M0.5 7 H12 M7 1.5 L12.5 7 L7 12.5" stroke="#8a8a8a" stroke-width="2" fill="none"/></svg>
<svg style="position:absolute;left:776px;top:50px;" width="9" height="7" viewBox="0 0 9 7"><path d="M1.3 1.3 L4.5 4.5 L7.7 1.3" stroke="#8a8a8a" stroke-width="1.8" fill="none"/></svg>
<svg style="position:absolute;left:794px;top:48px;" width="14" height="14" viewBox="0 0 14 14"><path d="M7 13.5 V1.5 M1.5 7 L7 1.5 L12.5 7" stroke="#ffffff" stroke-width="2" fill="none"/></svg>
<div style="left:814px;top:39px;width:116px;height:30px;background:#191919;border:1px solid #555;border-right:none;box-sizing:border-box;"></div>
<svg style="position:absolute;left:819px;top:45px;" width="13" height="16" viewBox="0 0 13 16"><rect x="0" y="0" width="12" height="16" fill="#f4cc48"/><rect x="1" y="1" width="10" height="14" fill="#ffe590"/><rect x="10" y="9" width="3" height="7" fill="#f4cc48"/><rect x="11" y="10" width="1" height="5" fill="#ffe48c"/><rect x="10" y="9" width="1" height="6" fill="#d8ac34"/><rect x="0" y="15" width="13" height="1" fill="#f4cc48"/></svg>
<svg style="position:absolute;left:838px;top:49px;" width="9" height="7" viewBox="0 0 9 7"><path d="M3.5 0.5 L0.8 3.2 L3.5 6 M7.5 0.5 L4.8 3.2 L7.5 6" stroke="#8a8a8a" stroke-width="1.1" fill="none"/></svg>
<div class="t" style="left:853px;top:46.5px;font-size:12px;line-height:15px;color:#ffffff;">co...</div>
<svg style="position:absolute;left:885px;top:51px;" width="6" height="8" viewBox="0 0 6 8"><path d="M1 0.8 L4.2 3.8 L1 6.8" stroke="#8a8a8a" stroke-width="1.8" fill="none"/></svg>
<div style="left:898px;top:39px;width:32px;height:30px;overflow:hidden">
<div class="t" style="left:0px;top:7.5px;font-size:12px;line-height:15px;color:#ffffff;">_mar...</div>
</div>
<div style="left:723px;top:82px;width:125px;height:19px;background:#777777;border:1px solid #8c8c8c;box-sizing:border-box;"></div>
<svg style="position:absolute;left:729px;top:85px;" width="11" height="15" viewBox="0 0 11 15"><path d="M0.5 0.5 H7 L10.5 4 V14.5 H0.5 Z" fill="#22184f" stroke="#3c2a8c"/><path d="M7 0.5 V4 H10.5 Z" fill="#9a6ae8"/><circle cx="5.5" cy="9" r="4.3" fill="#ff5a2a"/><path d="M5.5 4.7 A4.3 4.3 0 0 1 9.8 9 L7.5 9 A2 2 0 0 0 5.5 7 Z" fill="#ffc93a"/><circle cx="5.5" cy="9" r="2" fill="#8b4fe0"/></svg>
<div class="t" style="left:744px;top:84.5px;font-size:12px;line-height:15px;color:#ffffff;">render-image.htm</div>
<div style="left:708px;top:539px;width:222px;height:24px;background:#323232;"></div>
<div class="t" style="left:722px;top:545.0px;font-size:12px;line-height:15px;color:#e8e8e8;">1 item</div>
<div style="left:765px;top:546px;width:1px;height:12px;background:#e0e0e0;"></div>
<svg style="position:absolute;left:884px;top:545px;" width="17" height="13" viewBox="0 0 17 13"><rect x="0" y="0" width="4" height="13" fill="#e8e8e8"/><rect x="1" y="2" width="2" height="2" fill="#3a6ad0"/><rect x="1" y="6" width="2" height="2" fill="#3a6ad0"/><rect x="1" y="10" width="2" height="2" fill="#d03030"/><path d="M6 2.5 H9 M11 2.5 H14 M6 6.5 H9 M11 6.5 H14 M6 10.5 H9 M11 10.5 H14" stroke="#888" stroke-width="1"/></svg>
<svg style="position:absolute;left:907px;top:545px;" width="14" height="12" viewBox="0 0 14 12"><rect x="0" y="0" width="14" height="12" fill="#f0f0f0"/><rect x="2" y="2" width="10" height="8" fill="#4a90d8"/><path d="M2 7 Q6 5 12 6.5 V10 H2 Z" fill="#6a9a8a"/></svg>
<div style="left:936px;top:7px;width:573px;height:556px;background:#ffffff;border-left:1px solid #5a5a5a;box-sizing:border-box;"></div>
<svg style="position:absolute;left:946px;top:14px;" width="17" height="17" viewBox="0 0 17 17"><path d="M0.5 0.5 H9.5 L12.5 3.5 V15.5 H0.5 Z" fill="#fafafa" stroke="#5a5a5a"/><path d="M9.5 0.5 V3.5 H12.5" fill="#e0e0e0" stroke="#5a5a5a"/><rect x="2" y="2" width="1" height="1" fill="#666"/><rect x="4" y="2" width="1" height="1" fill="#666"/><rect x="6" y="2" width="1" height="1" fill="#666"/><rect x="2" y="4" width="7" height="1" fill="#c0d8e0"/><rect x="2" y="6" width="10" height="2" fill="#d8d890"/><rect x="2" y="8" width="10" height="4" fill="#8cd848"/><rect x="2" y="12" width="10" height="2" fill="#1e8a1a"/><path d="M7.5 13.5 L14 4.5" stroke="#eeb422" stroke-width="2.4"/><circle cx="15" cy="2.6" r="1.4" fill="#8a0a0a"/></svg>
<div class="t" style="left:967px;top:14.0px;font-size:12.4px;line-height:16px;color:#8a8a8a;">D:\www\web2.0\hugo-site\layouts\comics\_markup\render-image.htm - ...</div>
<div style="left:1389px;top:22px;width:10px;height:1px;background:#555;"></div>
<div style="left:1434px;top:17px;width:10px;height:10px;background:transparent;border:1px solid #555;box-sizing:border-box;"></div>
<svg style="position:absolute;left:1480px;top:17px;" width="10" height="10" viewBox="0 0 10 10"><path d="M0.5 0.5 L9.5 9.5 M9.5 0.5 L0.5 9.5" stroke="#555" stroke-width="1"/></svg>
<div class="t" style="left:944px;top:40.5px;font-size:12px;line-height:15px;color:#444444;">File</div>
<div class="t" style="left:976px;top:40.5px;font-size:12px;line-height:15px;color:#444444;">Edit</div>
<div class="t" style="left:1010px;top:40.5px;font-size:12px;line-height:15px;color:#444444;">Search</div>
<div class="t" style="left:1059px;top:40.5px;font-size:12px;line-height:15px;color:#444444;">View</div>
<div class="t" style="left:1098px;top:40.5px;font-size:12px;line-height:15px;color:#444444;">Encoding</div>
<div class="t" style="left:1162px;top:40.5px;font-size:12px;line-height:15px;color:#444444;">Language</div>
<div class="t" style="left:1228px;top:40.5px;font-size:12px;line-height:15px;color:#444444;">Settings</div>
<div class="t" style="left:1284px;top:40.5px;font-size:12px;line-height:15px;color:#444444;">Tools</div>
<div class="t" style="left:1325px;top:40.5px;font-size:12px;line-height:15px;color:#444444;">Macro</div>
<div class="t" style="left:1373px;top:40.5px;font-size:12px;line-height:15px;color:#444444;">Run</div>
<div class="t" style="left:1408px;top:40.5px;font-size:12px;line-height:15px;color:#444444;">Plugins</div>
<div class="t" style="left:944px;top:60.0px;font-size:12px;line-height:15px;color:#444444;">Window</div>
<div class="t" style="left:1002px;top:60.0px;font-size:12px;line-height:15px;color:#444444;">?</div>
<div class="t" style="left:1494px;top:60.0px;font-size:12px;line-height:15px;color:#444444;">X</div>
<div style="left:937px;top:75px;width:570px;height:29px;background:#f0f0f0;"></div>
<div style="left:939px;top:79px;width:122px;height:23px;background:#f0f0f0;"></div>
<div style="left:939px;top:79px;width:122px;height:4px;background:#f9a433;"></div>
<div style="left:1060px;top:79px;width:1px;height:23px;background:#6a6a6a;"></div>
<svg style="position:absolute;left:943px;top:85px;" width="14" height="14" viewBox="0 0 14 14"><rect x="0.5" y="0.5" width="13" height="13" fill="#5a8fd0" stroke="#3a6aa0"/><rect x="3" y="1" width="8" height="4" fill="#e8eef8"/><rect x="2.5" y="8" width="9" height="5" fill="#a8d890"/></svg>
<div class="t" style="left:958px;top:84.5px;font-size:11px;line-height:14px;color:#101030;letter-spacing:-0.35px;">render-image.htm</div>
<svg style="position:absolute;left:1044px;top:86px;" width="12" height="12" viewBox="0 0 12 12"><rect x="0" y="0" width="12" height="12" fill="#b87898"/><path d="M3 3 L9 9 M9 3 L3 9" stroke="#fff" stroke-width="2"/></svg>
<div style="left:940px;top:104px;width:564px;height:431px;background:#2a211c;"></div>
<div style="left:940px;top:104px;width:40px;height:431px;background:#4a463d;"></div>
<div style="left:980px;top:104px;width:14px;height:431px;background-color:#2a211c;background-image:linear-gradient(45deg,#5e5040 25%,transparent 25%,transparent 75%,#5e5040 75%),linear-gradient(45deg,#5e5040 25%,transparent 25%,transparent 75%,#5e5040 75%);background-size:2px 2px;background-position:0 0,1px 1px;"></div>
<div style="left:994px;top:175px;width:510px;height:14px;background:#4a3b32;"></div>
<div class="t" style="left:955px;top:105.5px;font-size:11.67px;line-height:15px;color:#e8c03a;font-family:'Liberation Mono', monospace;">1</div>
<div class="t" style="left:955px;top:119.5px;font-size:11.67px;line-height:15px;color:#e8c03a;font-family:'Liberation Mono', monospace;">2</div>
<div class="t" style="left:955px;top:133.5px;font-size:11.67px;line-height:15px;color:#e8c03a;font-family:'Liberation Mono', monospace;">3</div>
<div class="t" style="left:955px;top:147.5px;font-size:11.67px;line-height:15px;color:#e8c03a;font-family:'Liberation Mono', monospace;">4</div>
<div class="t" style="left:955px;top:161.5px;font-size:11.67px;line-height:15px;color:#e8c03a;font-family:'Liberation Mono', monospace;">5</div>
<div class="t" style="left:955px;top:175.5px;font-size:11.67px;line-height:15px;color:#e8c03a;font-family:'Liberation Mono', monospace;">6</div>
<svg style="position:absolute;left:983px;top:150px;" width="12" height="36" viewBox="0 0 12 36"><path d="M4.5 9 V32.5 H11" stroke="#1a1a1a" fill="none"/><rect x="0.5" y="0.5" width="8" height="8" fill="#f4f4f4" stroke="#2a2a2a"/><path d="M2 4.5 H7" stroke="#111"/></svg>
<div class="t" style="left:995px;top:106px;font-family:'Liberation Mono', monospace;font-size:11.67px;line-height:14px;"><span style="color:#ccc0ac">{{ $index := string .Text }}</span></div>
<div class="t" style="left:995px;top:120px;font-family:'Liberation Mono', monospace;font-size:11.67px;line-height:14px;"><span style="color:#ccc0ac">{{ $index = float $index }}</span></div>
<div class="t" style="left:995px;top:134px;font-family:'Liberation Mono', monospace;font-size:11.67px;line-height:14px;"><span style="color:#ccc0ac">{{ $next := $index | add 1 }}</span></div>
<div class="t" style="left:995px;top:148px;font-family:'Liberation Mono', monospace;font-size:11.67px;line-height:14px;"><span style="color:#4ea8f4">&lt;a</span><span style="color:#ccc0ac"> </span><span style="color:#eebc30">id</span><span style="color:#e4d4c4">=</span><span style="color:#74f070">&quot;page-{{$index}}&quot;</span><span style="color:#ccc0ac"> </span><span style="color:#eebc30">href</span><span style="color:#e4d4c4">=</span><span style="color:#74f070">&quot;#page-{{$next}}&quot;</span><span style="color:#ccc0ac"> </span><span style="color:#eebc30">title</span><span style="color:#e4d4c4">=</span><span style="color:#74f070">&quot;{{ .Title }}&quot;</span><span style="color:#4ea8f4"> &gt;</span></div>
<div class="t" style="left:995px;top:162px;font-family:'Liberation Mono', monospace;font-size:11.67px;line-height:14px;"><span style="color:#4ea8f4">  &lt;img</span><span style="color:#ccc0ac"> </span><span style="color:#eebc30">src</span><span style="color:#e4d4c4">=</span><span style="color:#74f070">&quot;{{ .Destination }}&quot;</span><span style="color:#ccc0ac"> </span><span style="color:#eebc30">alt</span><span style="color:#e4d4c4">=</span><span style="color:#74f070">&quot;{{ .Title }}&quot;</span><span style="color:#4ea8f4"> /&gt;</span></div>
<div class="t" style="left:995px;top:176px;font-family:'Liberation Mono', monospace;font-size:11.67px;line-height:14px;"><span style="color:#4ea8f4">&lt;/a&gt;</span></div>
<div style="left:937px;top:535px;width:572px;height:3px;background:#ffffff;"></div>
<div style="left:937px;top:538px;width:572px;height:25px;background:#f0f0f0;"></div>
<div style="left:937px;top:537px;width:570px;height:1px;background:#b8b8b8;"></div>
<div style="left:1506px;top:103px;width:1px;height:435px;background:#b0b0b0;"></div>
<div style="left:1503px;top:551px;width:2px;height:2px;background:#bcbcbc;"></div>
<div style="left:1503px;top:555px;width:2px;height:2px;background:#bcbcbc;"></div>
<div style="left:1499px;top:555px;width:2px;height:2px;background:#bcbcbc;"></div>
<div style="left:1503px;top:559px;width:2px;height:2px;background:#bcbcbc;"></div>
<div style="left:1499px;top:559px;width:2px;height:2px;background:#bcbcbc;"></div>
<div style="left:1495px;top:559px;width:2px;height:2px;background:#bcbcbc;"></div>
<div style="left:967px;top:540px;width:1px;height:23px;background:#d0d0d0;"></div>
<div style="left:1227px;top:540px;width:1px;height:23px;background:#d0d0d0;"></div>
<div style="left:1337px;top:540px;width:1px;height:23px;background:#d0d0d0;"></div>
<div style="left:1457px;top:540px;width:1px;height:23px;background:#d0d0d0;"></div>
<div style="left:1487px;top:540px;width:1px;height:23px;background:#d0d0d0;"></div>
<div class="t" style="left:939px;top:544.5px;font-size:11.5px;line-height:14px;color:#000000;">lengt</div>
<div class="t" style="left:972px;top:544.5px;font-size:11.5px;line-height:14px;color:#000000;">Ln : 6</div>
<div class="t" style="left:1012px;top:544.5px;font-size:11.5px;line-height:14px;color:#000000;">Col : 5</div>
<div class="t" style="left:1057px;top:544.5px;font-size:11.5px;line-height:14px;color:#000000;">Pos : 220</div>
<div class="t" style="left:1232px;top:544.5px;font-size:11.5px;line-height:14px;color:#000000;">Windows (CR LF)</div>
<div class="t" style="left:1342px;top:544.5px;font-size:11.5px;line-height:14px;color:#000000;">UTF-8</div>
<div class="t" style="left:1462px;top:544.5px;font-size:11.5px;line-height:14px;color:#000000;">INS</div>
<div style="left:1507px;top:7px;width:1px;height:556px;background:#8a8a8a;"></div>
</body></html>
